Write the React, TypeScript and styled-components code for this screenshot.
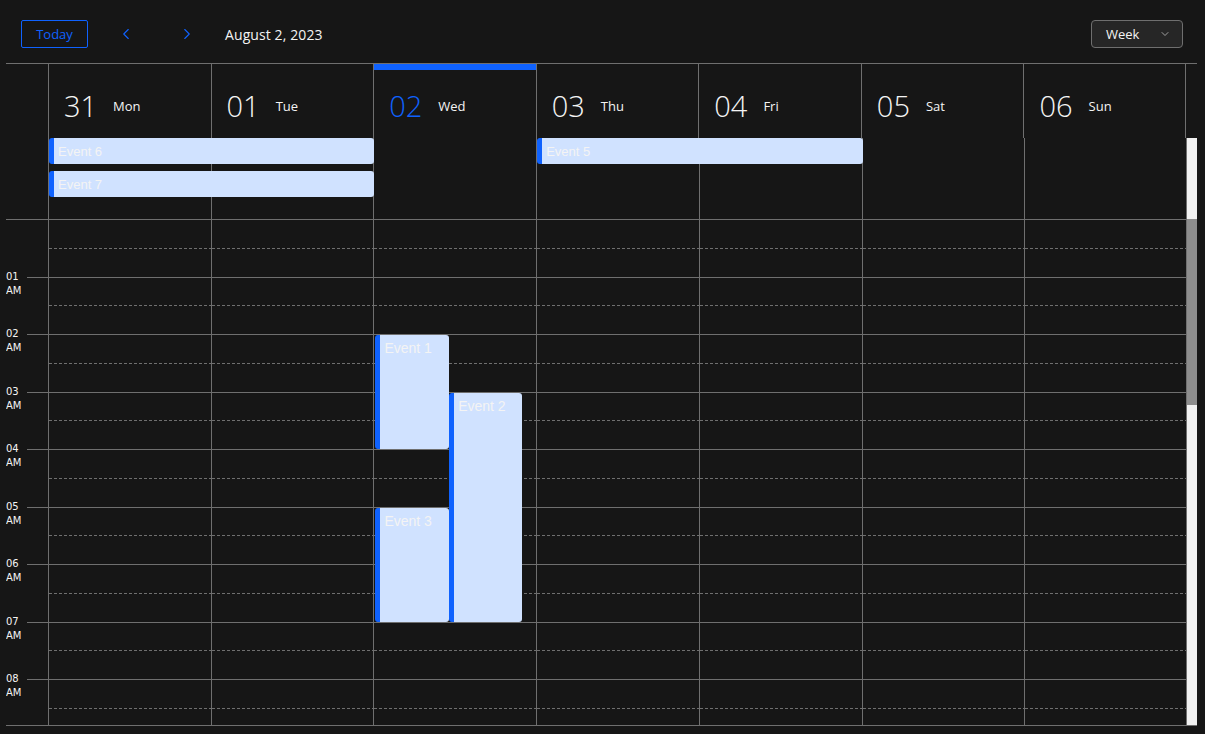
import React from "react";
import styled, { createGlobalStyle, css } from "styled-components";
import { ChevronLeft, ChevronRight, ChevronDown } from "lucide-react";

const BLUE = "#0f62fe";
const LINE = "#6f6f6f";
const BG = "#161616";
const TEXT = "#f4f4f4";
const EVENT_BG = "#d0e2ff";
const HOUR = 57.5;

const days = [
  { num: "31", name: "Mon" },
  { num: "01", name: "Tue" },
  { num: "02", name: "Wed" },
  { num: "03", name: "Thu" },
  { num: "04", name: "Fri" },
  { num: "05", name: "Sat" },
  { num: "06", name: "Sun" },
];
const todayIndex = 2;

const allDayEvents = [
  { title: "Event 6", start: 0, span: 2, row: 1 },
  { title: "Event 7", start: 0, span: 2, row: 2 },
  { title: "Event 5", start: 3, span: 2, row: 1 },
];

const timedEvents = [
  { title: "Event 1", day: 2, start: 2, end: 4, lane: 0 },
  { title: "Event 2", day: 2, start: 3, end: 7, lane: 1 },
  { title: "Event 3", day: 2, start: 5, end: 7, lane: 0 },
];

const hours = Array.from({ length: 24 }, (_, i) => i);

const GlobalStyle = createGlobalStyle`
  *, *::before, *::after { box-sizing: border-box; }
  html, body { margin: 0; background: ${BG}; }
  body {
    padding: 0 8px 0 6px;
    font-family: "Open Sans", "Noto Sans", sans-serif;
    color: ${TEXT};
  }
`;

const Toolbar = styled.header`
  display: flex;
  align-items: center;
  height: 63px;
  padding: 20px 14px 15px 15px;
`;

const TodayButton = styled.button`
  height: 28px;
  width: 67px;
  border: 1px solid ${BLUE};
  border-radius: 2px;
  background: transparent;
  color: ${BLUE};
  font-family: inherit;
  font-size: 13px;
  padding: 0;
  cursor: pointer;
`;

const NavButton = styled.button<{ $gap: number }>`
  width: 32px;
  height: 28px;
  margin-left: ${(p) => p.$gap}px;
  display: flex;
  align-items: center;
  justify-content: center;
  border: none;
  background: transparent;
  color: ${BLUE};
  padding: 0;
  cursor: pointer;
`;

const DateLabel = styled.div`
  margin-left: 22px;
  font-size: 14px;
  font-weight: 500;
  letter-spacing: 0.1px;
  color: ${TEXT};
`;

const Spacer = styled.div`
  flex: 1;
`;

const ViewSelect = styled.div`
  width: 92px;
  height: 28px;
  display: flex;
  align-items: center;
  justify-content: space-between;
  padding: 0 11px 0 14px;
  background: #262626;
  border: 1px solid ${LINE};
  border-radius: 4px;
  font-size: 13px;
  color: ${TEXT};
  svg {
    color: #c6c6c6;
  }
`;

const Calendar = styled.section`
  border-top: 1px solid ${LINE};
  border-bottom: 1px solid ${LINE};
`;

const HeaderRow = styled.div`
  display: flex;
  height: 74px;
`;

const GutterSpace = styled.div`
  width: 42px;
  flex: none;
`;

const ScrollbarSpace = styled.div`
  width: 11px;
  flex: none;
`;

const SevenCols = styled.div`
  flex: 1;
  min-width: 0;
  display: grid;
  grid-template-columns: repeat(7, 1fr);
`;

const DayHead = styled.div<{ $today: boolean; $last: boolean }>`
  display: flex;
  align-items: center;
  padding: 9px 0 0 15px;
  border-left: 1px solid ${LINE};
  ${(p) =>
    p.$last &&
    css`
      border-right: 1px solid ${LINE};
    `}
  ${(p) =>
    p.$today &&
    css`
      box-shadow: inset 0 6px 0 ${BLUE};
    `}
`;

const DayNum = styled.span<{ $today: boolean }>`
  font-size: 29px;
  font-weight: 300;
  line-height: 1;
  color: ${(p) => (p.$today ? BLUE : TEXT)};
`;

const DayName = styled.span`
  margin-left: 16px;
  font-size: 13px;
  color: ${TEXT};
`;

const BodyRow = styled.div`
  display: flex;
  height: 587px;
`;

const ScrollArea = styled.div`
  flex: 1;
  min-width: 0;
  overflow-y: auto;
  overflow-x: hidden;
  scrollbar-width: none;
  &::-webkit-scrollbar {
    display: none;
  }
`;

const ScrollTrack = styled.div`
  width: 10px;
  flex: none;
  display: flex;
  flex-direction: column;
  padding-top: 81px;
  background: #f1f1f1;
`;

const ScrollThumb = styled.div`
  height: 186px;
  background: #8d8d8d;
`;

const AllDayRow = styled.div`
  display: flex;
  height: 81px;
`;

const AllDayGrid = styled.div`
  flex: 1;
  min-width: 0;
  display: grid;
  grid-template-columns: repeat(7, 1fr);
  grid-template-rows: 26px 26px 1fr;
  row-gap: 7px;
`;

const AllDayCol = styled.div<{ $col: number; $last: boolean }>`
  grid-column: ${(p) => p.$col + 1};
  grid-row: 1 / -1;
  border-left: 1px solid ${LINE};
  ${(p) =>
    p.$last &&
    css`
      border-right: 1px solid ${LINE};
    `}
`;

const AllDayEvent = styled.div<{ $start: number; $span: number; $row: number }>`
  grid-column: ${(p) => p.$start + 1} / span ${(p) => p.$span};
  grid-row: ${(p) => p.$row};
  z-index: 1;
  margin: 0 -1px 0 1px;
  display: flex;
  align-items: center;
  padding-left: 4px;
  background: ${EVENT_BG};
  border-left: 5px solid ${BLUE};
  border-radius: 3px;
  font-family: "Liberation Sans", Arial, sans-serif;
  font-size: 13px;
  color: ${TEXT};
`;

const TimeGrid = styled.div`
  display: flex;
`;

const TimeGutter = styled.div`
  width: 42px;
  flex: none;
`;

const GutterCell = styled.div<{ $first: boolean }>`
  height: ${HOUR}px;
  display: flex;
  align-items: flex-start;
  ${(p) =>
    p.$first &&
    css`
      border-top: 1px solid ${LINE};
    `}
`;

const HourLabel = styled.div`
  display: flex;
  flex-direction: column;
  margin-top: -7px;
  font-family: "DejaVu Sans", Verdana, sans-serif;
  font-size: 10px;
  line-height: 14px;
  color: ${TEXT};
`;

const Tick = styled.div`
  margin-left: auto;
  width: 21px;
  border-top: 1px solid ${LINE};
`;

const DayColumn = styled.div<{ $last: boolean }>`
  position: relative;
  border-left: 1px solid ${LINE};
  ${(p) =>
    p.$last &&
    css`
      border-right: 1px solid ${LINE};
    `}
`;

const Slot = styled.div`
  height: ${HOUR}px;
  border-top: 1px solid ${LINE};
`;

const HalfLine = styled.div`
  height: 1px;
  margin-top: ${HOUR / 2 - 1}px;
  background: repeating-linear-gradient(
    90deg,
    ${LINE} 0 3px,
    transparent 3px 5px
  );
`;

const TimedEvent = styled.div`
  position: absolute;
  width: 45.2%;
  padding: 5px 0 0 4px;
  background: ${EVENT_BG};
  border-left: 5px solid ${BLUE};
  border-radius: 3px;
  font-family: "Liberation Sans", Arial, sans-serif;
  font-size: 14px;
  line-height: 16px;
  color: ${TEXT};
`;

const pad = (n: number) => String(n).padStart(2, "0");

export default function App() {
  return (
    <>
      <GlobalStyle />
      <Toolbar>
        <TodayButton>Today</TodayButton>
        <NavButton $gap={22} aria-label="Previous">
          <ChevronLeft size={18} strokeWidth={1.5} />
        </NavButton>
        <NavButton $gap={29} aria-label="Next">
          <ChevronRight size={18} strokeWidth={1.5} />
        </NavButton>
        <DateLabel>August 2, 2023</DateLabel>
        <Spacer />
        <ViewSelect>
          <span>Week</span>
          <ChevronDown size={12} strokeWidth={1.5} />
        </ViewSelect>
      </Toolbar>
      <Calendar>
        <HeaderRow>
          <GutterSpace />
          <SevenCols>
            {days.map((d, i) => (
              <DayHead key={d.name} $today={i === todayIndex} $last={i === 6}>
                <DayNum $today={i === todayIndex}>{d.num}</DayNum>
                <DayName>{d.name}</DayName>
              </DayHead>
            ))}
          </SevenCols>
          <ScrollbarSpace />
        </HeaderRow>
        <BodyRow>
          <ScrollArea>
            <AllDayRow>
              <GutterSpace />
              <AllDayGrid>
                {days.map((d, i) => (
                  <AllDayCol key={d.name} $col={i} $last={i === 6} />
                ))}
                {allDayEvents.map((e) => (
                  <AllDayEvent key={e.title} $start={e.start} $span={e.span} $row={e.row}>
                    {e.title}
                  </AllDayEvent>
                ))}
              </AllDayGrid>
            </AllDayRow>
            <TimeGrid>
              <TimeGutter>
                {hours.map((h) => (
                  <GutterCell key={h} $first={h === 0}>
                    {h > 0 && (
                      <>
                        <HourLabel>
                          <span>{pad(h > 12 ? h - 12 : h)}</span>
                          <span>{h < 12 ? "AM" : "PM"}</span>
                        </HourLabel>
                        <Tick />
                      </>
                    )}
                  </GutterCell>
                ))}
              </TimeGutter>
              <SevenCols>
                {days.map((d, i) => (
                  <DayColumn key={d.name} $last={i === 6}>
                    {hours.map((h) => (
                      <Slot key={h}>
                        <HalfLine />
                      </Slot>
                    ))}
                    {timedEvents
                      .filter((e) => e.day === i)
                      .map((e) => (
                        <TimedEvent
                          key={e.title}
                          style={{
                            top: e.start * HOUR + 1,
                            height: (e.end - e.start) * HOUR - 1,
                            left: `calc(${e.lane * 45.6}% + 1px)`,
                          }}
                        >
                          {e.title}
                        </TimedEvent>
                      ))}
                  </DayColumn>
                ))}
              </SevenCols>
            </TimeGrid>
          </ScrollArea>
          <ScrollTrack>
            <ScrollThumb />
          </ScrollTrack>
        </BodyRow>
      </Calendar>
    </>
  );
}
